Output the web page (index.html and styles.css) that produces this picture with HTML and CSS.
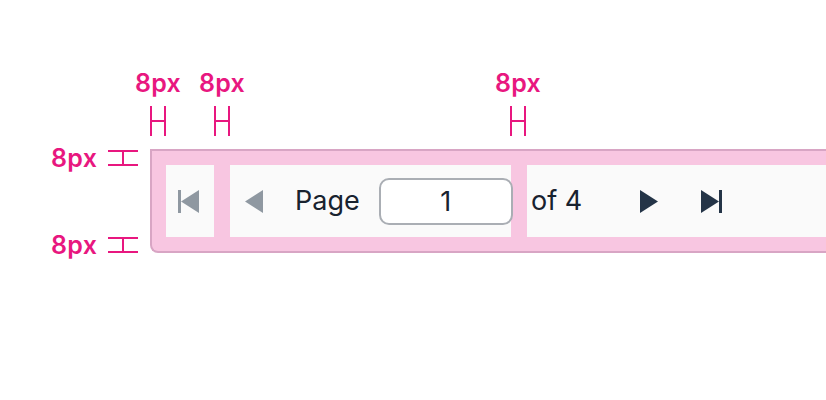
FILE: index.html
```html
<!DOCTYPE html>
<html lang="en">
<head>
<meta charset="utf-8">
<title>Pager spacing</title>
<link rel="stylesheet" href="styles.css">
</head>
<body>
<div class="stage">
  <div class="pager">
    <div class="seg seg-first">
      <button class="icon-btn muted" aria-label="First page">
        <svg width="21" height="23" viewBox="0 0 21 23"><rect x="0" y="0" width="3" height="23"/><polygon points="21,0 21,23 3,11.5"/></svg>
      </button>
    </div>
    <div class="seg seg-middle">
      <button class="icon-btn muted" aria-label="Previous page">
        <svg width="18" height="23" viewBox="0 0 18 23"><polygon points="18,0 18,23 0,11.5"/></svg>
      </button>
      <span class="label">Page</span>
      <input class="page-input" type="text" value="1">
    </div>
    <div class="seg seg-last">
      <span class="label of">of 4</span>
      <button class="icon-btn dark next" aria-label="Next page">
        <svg width="18" height="23" viewBox="0 0 18 23"><polygon points="0,0 0,23 18,11.5"/></svg>
      </button>
      <button class="icon-btn dark lastp" aria-label="Last page">
        <svg width="21" height="23" viewBox="0 0 21 23"><polygon points="0,0 0,23 18,11.5"/><rect x="18" y="0" width="3" height="23"/></svg>
      </button>
    </div>
  </div>

  <div class="ann ann-top a1"><span class="ann-text">8px</span>
    <svg class="hmark" width="16" height="30" viewBox="0 0 16 30"><line x1="1" y1="0" x2="1" y2="30"/><line x1="15" y1="0" x2="15" y2="30"/><line x1="1" y1="15" x2="15" y2="15"/></svg>
  </div>
  <div class="ann ann-top a2"><span class="ann-text">8px</span>
    <svg class="hmark" width="16" height="30" viewBox="0 0 16 30"><line x1="1" y1="0" x2="1" y2="30"/><line x1="15" y1="0" x2="15" y2="30"/><line x1="1" y1="15" x2="15" y2="15"/></svg>
  </div>
  <div class="ann ann-top a3"><span class="ann-text">8px</span>
    <svg class="hmark" width="16" height="30" viewBox="0 0 16 30"><line x1="1" y1="0" x2="1" y2="30"/><line x1="15" y1="0" x2="15" y2="30"/><line x1="1" y1="15" x2="15" y2="15"/></svg>
  </div>
  <div class="ann ann-left l1"><span class="ann-text">8px</span>
    <svg class="vmark" width="30" height="16" viewBox="0 0 30 16"><line x1="0" y1="1" x2="30" y2="1"/><line x1="0" y1="15" x2="30" y2="15"/><line x1="15" y1="1" x2="15" y2="15"/></svg>
  </div>
  <div class="ann ann-left l2"><span class="ann-text">8px</span>
    <svg class="vmark" width="30" height="16" viewBox="0 0 30 16"><line x1="0" y1="1" x2="30" y2="1"/><line x1="0" y1="15" x2="30" y2="15"/><line x1="15" y1="1" x2="15" y2="15"/></svg>
  </div>
</div>
</body>
</html>
```

FILE: styles.css
```css
html, body {
  margin: 0;
  padding: 0;
  background: #ffffff;
  overflow: hidden;
}

.stage {
  position: relative;
  width: 826px;
  height: 400px;
  padding: 149px 0 0 150px;
  box-sizing: border-box;
  font-family: Inter, "Noto Sans", "Liberation Sans", sans-serif;
}

.pager {
  display: flex;
  gap: 16px;
  width: 800px;
  box-sizing: border-box;
  padding: 14px;
  background: #f8c6e1;
  border: 2px solid #d8a5c4;
  border-right: none;
  border-bottom-left-radius: 8px;
}

.seg {
  display: flex;
  align-items: center;
  height: 72px;
  background: #fafafa;
}

.seg-first {
  width: 48px;
  justify-content: center;
  padding-right: 3px;
  box-sizing: border-box;
}

.seg-middle {
  width: 281px;
  padding-left: 15px;
  box-sizing: border-box;
}

.seg-last {
  flex: 1;
  padding-left: 4px;
}

.icon-btn {
  display: flex;
  align-items: center;
  justify-content: center;
  border: none;
  background: none;
  padding: 0;
  margin: 0;
}

.icon-btn svg { display: block; }
.muted svg { fill: #8f98a1; }
.dark svg { fill: #243447; }

.label {
  font-size: 27px;
  line-height: 32px;
  color: #18222f;
}

.seg-middle .label { margin-left: 32px; }

.page-input {
  margin-left: 19px;
  width: 134px;
  height: 47px;
  box-sizing: border-box;
  margin-right: -2px;
  border: 2px solid #aaaeb4;
  border-radius: 10px;
  background: #ffffff;
  font-family: inherit;
  font-size: 27px;
  color: #18222f;
  text-align: center;
  padding: 0;
  outline: none;
  position: relative;
  z-index: 1;
}

.next { margin-left: 58px; }
.lastp { margin-left: 43px; }

/* measurement annotations */
.ann {
  position: absolute;
  display: flex;
  align-items: center;
  color: #e8177f;
}

.ann-text {
  font-family: Inter, "Noto Sans", sans-serif;
  font-weight: 600;
  font-size: 25px;
  line-height: 24px;
  letter-spacing: 0.3px;
}

.ann svg line {
  stroke: #e8177f;
  stroke-width: 2;
}

.ann-top {
  flex-direction: column;
  width: 64px;
  top: 71px;
  gap: 11px;
}

.a1 { left: 126px; }
.a2 { left: 190px; }
.a3 { left: 486px; }

.ann-left {
  flex-direction: row;
  left: 51px;
  gap: 11px;
}

.l1 { top: 146px; }
.l2 { top: 233px; }
```
